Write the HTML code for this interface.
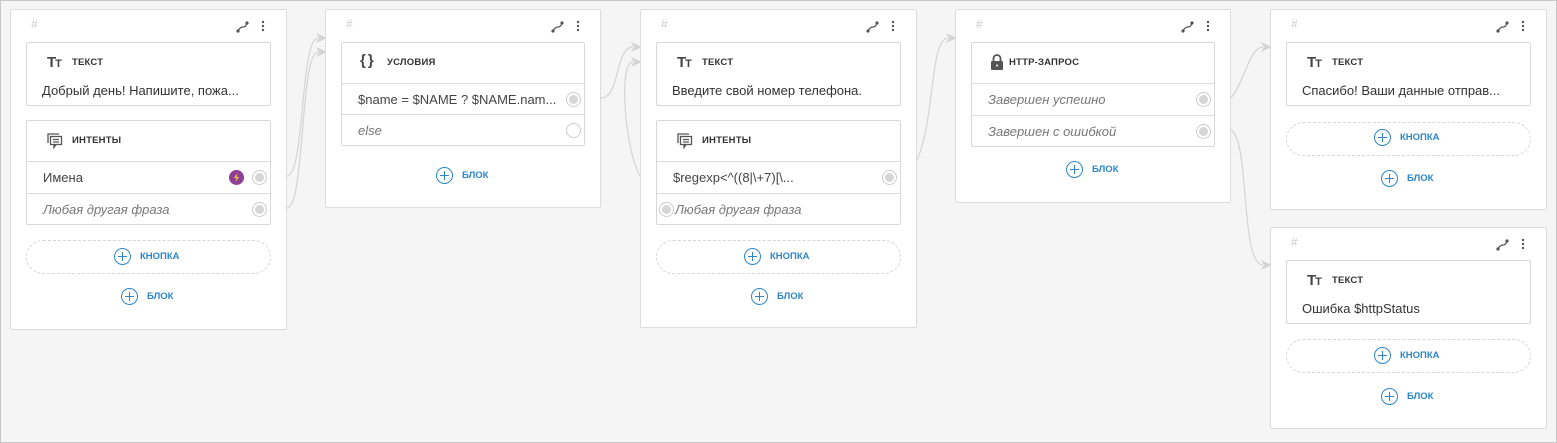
<!DOCTYPE html>
<html><head><meta charset="utf-8"><style>
*{box-sizing:border-box;margin:0;padding:0}
body{width:1557px;height:443px;background:#f5f5f5;position:relative;overflow:hidden;font-family:"Liberation Sans","DejaVu Sans",sans-serif;color:#333}
.frame{position:absolute;left:0;top:0;width:1557px;height:443px;border:1px solid #c8c8c8;pointer-events:none}
.card{position:absolute;background:#fff;border:1px solid #dcdcdc;border-radius:2px}
.hash{position:absolute;left:20px;top:7px;color:#ccc;font-size:12px}
.ic{position:absolute;top:10px}
.sec{position:absolute;background:#fff;border:1px solid #d8d8d8;border-radius:2px}
.lbl{position:absolute;left:45px;top:14px;font-size:9.5px;font-weight:bold;text-transform:uppercase;letter-spacing:.2px;color:#333}
.txt{position:absolute;left:15px;top:40px;font-size:13px;color:#333;white-space:nowrap}
.row{position:absolute;left:0;right:0;border-top:1px solid #ddd;height:32px;font-size:13px;line-height:31px;padding-left:16px;color:#444;white-space:nowrap}
.row.i{font-style:italic;color:#777}
.dot{position:absolute;right:3px;top:8px;width:15px;height:15px;border-radius:50%;border:1px solid #ccc;background:#fff}
.dot.f::after{content:"";position:absolute;left:2px;top:2px;width:9px;height:9px;border-radius:50%;background:#d6d6d6}
.btn{position:absolute;border:1px dashed #d6d6d6;border-radius:17px;height:34px}
.add{position:absolute;display:flex;align-items:center;gap:9px;font-size:9.5px;font-weight:bold;color:#2e86c8;text-transform:uppercase}
.pl{width:17px;height:17px;border:1.3px solid #2e86c8;border-radius:50%;position:relative}
.pl::before{content:"";position:absolute;left:3px;right:3px;top:7px;height:1.3px;background:#2e86c8}
.pl::after{content:"";position:absolute;top:3px;bottom:3px;left:7px;width:1.3px;background:#2e86c8}
.tt{position:absolute;left:20px;top:11px;font-weight:bold;font-size:15px;color:#444;letter-spacing:-1px;font-family:"Liberation Sans",sans-serif}
.tt small{font-size:11px}
</style></head><body>
<svg width="1557" height="443" style="position:absolute;left:0;top:0" fill="none" stroke="#d4d4d4" stroke-width="1.2">
<path d="M287 176 C305 176 300 38 318 38"/><path d="M287 208 C305 208 300 52 318 52"/>
<path d="M601 98 C620 98 615 47 633 47"/><path d="M640 176 C625 150 618 62 633 62"/>
<path d="M917 160 C935 120 930 38 948 38"/>
<path d="M1231 98 C1245 80 1250 47 1263 47"/><path d="M1231 130 C1250 140 1240 265 1263 265"/>
<g fill="#d4d4d4" stroke="none">
<path d="M316 33 L327 38 L316 43 L319 38Z"/><path d="M316 47 L327 52 L316 57 L319 52Z"/>
<path d="M631 42 L642 47 L631 52 L634 47Z"/><path d="M631 57 L642 62 L631 67 L634 62Z"/>
<path d="M946 33 L957 38 L946 43 L949 38Z"/>
<path d="M1261 42 L1272 47 L1261 52 L1264 47Z"/><path d="M1261 260 L1272 265 L1261 270 L1264 265Z"/>
</g></svg>

<!-- Card 1 -->
<div class="card" style="left:10px;top:9px;width:277px;height:321px">
<div class="hash">#</div>
<svg class="ic" style="left:224px" width="36" height="14"><path d="M3 11 Q5 7 8 7 Q11 7 12 3" stroke="#555" stroke-width="1.3" fill="none"/><circle cx="3" cy="11" r="1.6" fill="#555"/><circle cx="12" cy="3" r="1.6" fill="#555"/><circle cx="28" cy="2" r="1.2" fill="#555"/><circle cx="28" cy="6" r="1.2" fill="#555"/><circle cx="28" cy="10" r="1.2" fill="#555"/></svg>
</div>
<div class="sec" style="left:26px;top:42px;width:245px;height:64px"><div class="tt">T<small>T</small></div><div class="lbl">Текст</div><div class="txt">Добрый день! Напишите, пожа...</div></div>
<div class="sec" style="left:26px;top:120px;width:245px;height:105px">
<svg style="position:absolute;left:20px;top:12px" width="16" height="16" fill="none" stroke="#555" stroke-width="1.3"><path d="M1 10V1h11"/><rect x="3.5" y="3.5" width="11" height="8"/><path d="M6 6.5h6M6 9h6M7 11.5l0 3 2-3"/></svg>
<div class="lbl">Интенты</div>
<div class="row" style="top:40px">Имена<div style="position:absolute;right:26px;top:8px;width:15px;height:15px;border-radius:50%;background:#8e3f96"><svg width="15" height="15" style="position:absolute;left:0;top:0"><path d="M8.5 3 L5 8 H7.5 L6.5 12 L10 7 H7.5Z" fill="#f5c542"/></svg></div><div class="dot f"></div></div>
<div class="row i" style="top:72px">Любая другая фраза<div class="dot f"></div></div>
</div>
<div class="btn" style="left:26px;top:240px;width:245px"></div>
<div class="add" style="left:114px;top:248px"><div class="pl"></div>Кнопка</div>
<div class="add" style="left:121px;top:288px"><div class="pl"></div>Блок</div>

<!-- Card 2 -->
<div class="card" style="left:325px;top:9px;width:276px;height:199px"><div class="hash">#</div>
<svg class="ic" style="left:224px" width="36" height="14"><path d="M3 11 Q5 7 8 7 Q11 7 12 3" stroke="#555" stroke-width="1.3" fill="none"/><circle cx="3" cy="11" r="1.6" fill="#555"/><circle cx="12" cy="3" r="1.6" fill="#555"/><circle cx="28" cy="2" r="1.2" fill="#555"/><circle cx="28" cy="6" r="1.2" fill="#555"/><circle cx="28" cy="10" r="1.2" fill="#555"/></svg></div>
<div class="sec" style="left:341px;top:42px;width:244px;height:104px">
<div style="position:absolute;left:18px;top:9px;font-size:15px;font-weight:bold;color:#444;letter-spacing:2px">{}</div><div class="lbl">Условия</div>
<div class="row" style="top:40px">$name = $NAME ? $NAME.nam...<div class="dot f"></div></div>
<div class="row i" style="top:71px">else<div class="dot"></div></div></div>
<div class="add" style="left:436px;top:167px"><div class="pl"></div>Блок</div>

<!-- Card 3 -->
<div class="card" style="left:640px;top:9px;width:277px;height:319px"><div class="hash">#</div>
<svg class="ic" style="left:224px" width="36" height="14"><path d="M3 11 Q5 7 8 7 Q11 7 12 3" stroke="#555" stroke-width="1.3" fill="none"/><circle cx="3" cy="11" r="1.6" fill="#555"/><circle cx="12" cy="3" r="1.6" fill="#555"/><circle cx="28" cy="2" r="1.2" fill="#555"/><circle cx="28" cy="6" r="1.2" fill="#555"/><circle cx="28" cy="10" r="1.2" fill="#555"/></svg></div>
<div class="sec" style="left:656px;top:42px;width:245px;height:64px"><div class="tt">T<small>T</small></div><div class="lbl">Текст</div><div class="txt">Введите свой номер телефона.</div></div>
<div class="sec" style="left:656px;top:120px;width:245px;height:105px">
<svg style="position:absolute;left:20px;top:12px" width="16" height="16" fill="none" stroke="#555" stroke-width="1.3"><path d="M1 10V1h11"/><rect x="3.5" y="3.5" width="11" height="8"/><path d="M6 6.5h6M6 9h6M7 11.5l0 3 2-3"/></svg>
<div class="lbl">Интенты</div>
<div class="row" style="top:40px">$regexp&lt;^((8|\+7)[\...<div class="dot f"></div></div>
<div class="row i" style="top:72px;padding-left:18px">Любая другая фраза<div class="dot f" style="left:2px;right:auto"></div></div></div>
<div class="btn" style="left:656px;top:240px;width:245px"></div>
<div class="add" style="left:744px;top:248px"><div class="pl"></div>Кнопка</div>
<div class="add" style="left:751px;top:288px"><div class="pl"></div>Блок</div>

<!-- Card 4 -->
<div class="card" style="left:955px;top:9px;width:276px;height:194px"><div class="hash">#</div>
<svg class="ic" style="left:224px" width="36" height="14"><path d="M3 11 Q5 7 8 7 Q11 7 12 3" stroke="#555" stroke-width="1.3" fill="none"/><circle cx="3" cy="11" r="1.6" fill="#555"/><circle cx="12" cy="3" r="1.6" fill="#555"/><circle cx="28" cy="2" r="1.2" fill="#555"/><circle cx="28" cy="6" r="1.2" fill="#555"/><circle cx="28" cy="10" r="1.2" fill="#555"/></svg></div>
<div class="sec" style="left:971px;top:42px;width:244px;height:105px">
<svg style="position:absolute;left:18px;top:11px" width="14" height="16"><path d="M3.5 7V4.5a3.5 3.5 0 0 1 7 0V7" stroke="#555" stroke-width="1.8" fill="none"/><rect x="1" y="7" width="12" height="9" rx="1" fill="#555"/><circle cx="7" cy="11.5" r="1" fill="#fff"/></svg>
<div class="lbl" style="left:37px">HTTP-запрос</div>
<div class="row i" style="top:40px">Завершен успешно<div class="dot f"></div></div>
<div class="row i" style="top:72px">Завершен с ошибкой<div class="dot f"></div></div></div>
<div class="add" style="left:1066px;top:161px"><div class="pl"></div>Блок</div>

<!-- Card 5 -->
<div class="card" style="left:1270px;top:9px;width:277px;height:201px"><div class="hash">#</div>
<svg class="ic" style="left:224px" width="36" height="14"><path d="M3 11 Q5 7 8 7 Q11 7 12 3" stroke="#555" stroke-width="1.3" fill="none"/><circle cx="3" cy="11" r="1.6" fill="#555"/><circle cx="12" cy="3" r="1.6" fill="#555"/><circle cx="28" cy="2" r="1.2" fill="#555"/><circle cx="28" cy="6" r="1.2" fill="#555"/><circle cx="28" cy="10" r="1.2" fill="#555"/></svg></div>
<div class="sec" style="left:1286px;top:42px;width:245px;height:64px"><div class="tt">T<small>T</small></div><div class="lbl">Текст</div><div class="txt">Спасибо! Ваши данные отправ...</div></div>
<div class="btn" style="left:1286px;top:122px;width:245px"></div>
<div class="add" style="left:1374px;top:129px"><div class="pl"></div>Кнопка</div>
<div class="add" style="left:1381px;top:170px"><div class="pl"></div>Блок</div>

<!-- Card 6 -->
<div class="card" style="left:1270px;top:227px;width:277px;height:202px"><div class="hash">#</div>
<svg class="ic" style="left:224px" width="36" height="14"><path d="M3 11 Q5 7 8 7 Q11 7 12 3" stroke="#555" stroke-width="1.3" fill="none"/><circle cx="3" cy="11" r="1.6" fill="#555"/><circle cx="12" cy="3" r="1.6" fill="#555"/><circle cx="28" cy="2" r="1.2" fill="#555"/><circle cx="28" cy="6" r="1.2" fill="#555"/><circle cx="28" cy="10" r="1.2" fill="#555"/></svg></div>
<div class="sec" style="left:1286px;top:260px;width:245px;height:64px"><div class="tt">T<small>T</small></div><div class="lbl">Текст</div><div class="txt">Ошибка $httpStatus</div></div>
<div class="btn" style="left:1286px;top:339px;width:245px"></div>
<div class="add" style="left:1374px;top:347px"><div class="pl"></div>Кнопка</div>
<div class="add" style="left:1381px;top:388px"><div class="pl"></div>Блок</div>
<div class="frame"></div>
</body></html>
